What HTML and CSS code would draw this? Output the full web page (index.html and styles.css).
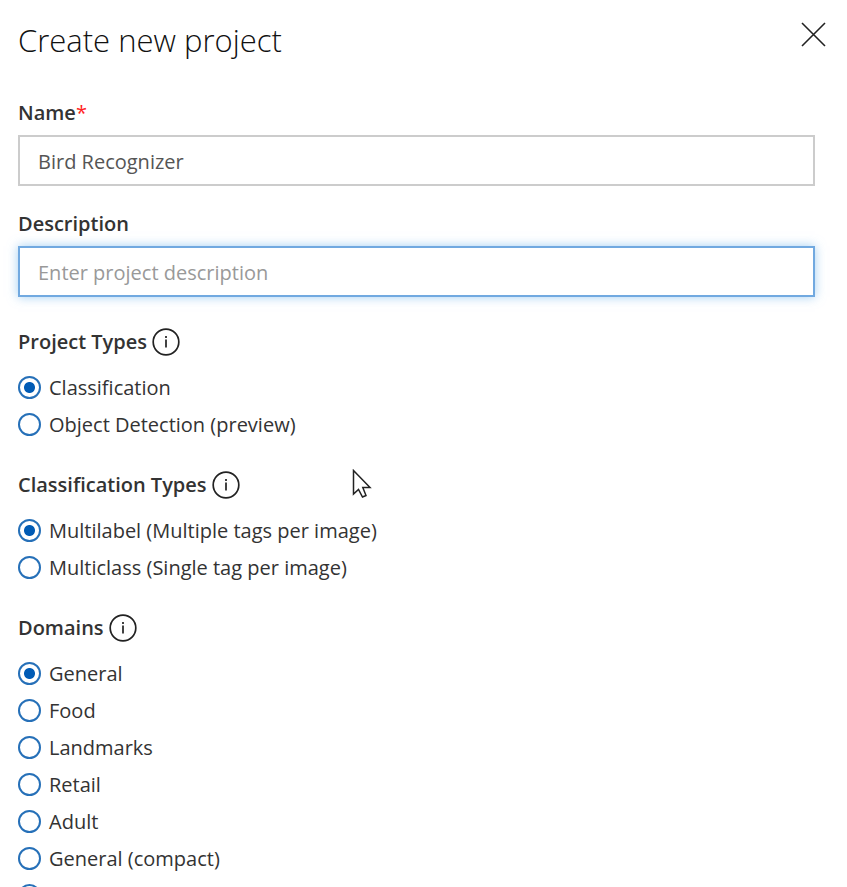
FILE: index.html
```html
<!DOCTYPE html>
<html lang="en">
<head>
  <meta charset="utf-8">
  <meta name="viewport" content="width=device-width, initial-scale=1">
  <title>Create new project</title>
  <link rel="stylesheet" href="styles.css">
</head>
<body>
  <main class="panel">
    <header class="panel-header">
      <h1 class="title">Create new project</h1>
      <button class="close" type="button" aria-label="Close">
        <svg width="26" height="26" viewBox="0 0 26 26" stroke-width="1.6" aria-hidden="true"><path d="M1 1 24 24M24 1 1 24"/></svg>
      </button>
    </header>

    <form class="form">
      <div class="field">
        <label class="label" for="name">Name<span class="required">*</span></label>
        <input class="input" id="name" type="text" value="Bird Recognizer">
      </div>
      <div class="field">
        <label class="label" for="description">Description</label>
        <input class="input input-active" id="description" type="text" placeholder="Enter project description">
      </div>

      <div class="group" role="radiogroup" aria-labelledby="project-types">
        <div class="group-head">
          <span class="label" id="project-types">Project Types</span>
          <button class="info" type="button" aria-label="About project types">
            <svg width="28" height="28" viewBox="0 0 28 28" stroke-width="1.7" aria-hidden="true"><circle cx="14" cy="14" r="12.8"/><path d="M14 11.5V19.5M14 8V10"/></svg>
          </button>
        </div>
        <label class="option"><input class="radio" type="radio" name="type" checked>Classification</label>
        <label class="option"><input class="radio" type="radio" name="type">Object Detection (preview)</label>
      </div>

      <div class="group" role="radiogroup" aria-labelledby="classification-types">
        <div class="group-head">
          <span class="label" id="classification-types">Classification Types</span>
          <button class="info" type="button" aria-label="About classification types">
            <svg width="28" height="28" viewBox="0 0 28 28" stroke-width="1.7" aria-hidden="true"><circle cx="14" cy="14" r="12.8"/><path d="M14 11.5V19.5M14 8V10"/></svg>
          </button>
        </div>
        <label class="option"><input class="radio" type="radio" name="classification" checked>Multilabel (Multiple tags per image)</label>
        <label class="option"><input class="radio" type="radio" name="classification">Multiclass (Single tag per image)</label>
      </div>

      <div class="group" role="radiogroup" aria-labelledby="domains">
        <div class="group-head">
          <span class="label" id="domains">Domains</span>
          <button class="info" type="button" aria-label="About domains">
            <svg width="28" height="28" viewBox="0 0 28 28" stroke-width="1.7" aria-hidden="true"><circle cx="14" cy="14" r="12.8"/><path d="M14 11.5V19.5M14 8V10"/></svg>
          </button>
        </div>
        <label class="option"><input class="radio" type="radio" name="domain" checked>General</label>
        <label class="option"><input class="radio" type="radio" name="domain">Food</label>
        <label class="option"><input class="radio" type="radio" name="domain">Landmarks</label>
        <label class="option"><input class="radio" type="radio" name="domain">Retail</label>
        <label class="option"><input class="radio" type="radio" name="domain">Adult</label>
        <label class="option"><input class="radio" type="radio" name="domain">General (compact)</label>
        <div class="option"><input class="radio" type="radio" name="domain" aria-label="Food (compact)"></div>
      </div>
    </form>

    <svg class="pointer" width="20" height="30" viewBox="0 0 20 30" stroke-width="1.5" aria-hidden="true"><path d="M1.5 1.5V25L6.5 20.5 10.5 28 14 26.5 10.8 18.5H18Z"/></svg>
  </main>
</body>
</html>
```

FILE: styles.css
```css
* {
  box-sizing: border-box;
}

body {
  margin: 0;
  background: #fff;
  color: #333;
  font-family: "Segoe UI", "Open Sans", sans-serif;
  font-size: 20px;
  line-height: 24px;
}

.panel {
  position: relative;
  height: 100vh;
  overflow: hidden;
  padding: 20px 18px;
}

.panel-header {
  display: flex;
  justify-content: space-between;
  align-items: flex-start;
}

.title {
  margin: 0;
  color: #111;
  font-size: 31px;
  font-weight: 300;
  line-height: 40px;
}

.close,
.info {
  display: block;
  padding: 0;
  border: 0;
  background: none;
}

.close {
  padding: 2px;
}

.close svg,
.info svg {
  display: block;
  fill: none;
  stroke: #222;
}

.form {
  padding-top: 41px;
}

.field {
  display: grid;
  gap: 10px;
  margin: 0 14px 26px 0;
}

.label {
  font-weight: 600;
}

.required {
  color: #f22;
  font-weight: 400;
}

.input {
  width: 100%;
  height: 51px;
  padding: 2px 18px 0;
  border: 2px solid #ccc;
  outline: 0;
  background: #fff;
  color: #555;
  font: inherit;
}

.input::placeholder {
  color: #999;
  opacity: 1;
}

.input-active {
  border-color: #71a9e0;
  box-shadow: 0 0 10px rgba(102, 175, 233, 0.6);
}

.group {
  display: grid;
  gap: 14px;
  margin: 31px 0 35px;
}

.group + .group {
  margin-top: 0;
}

.group-head {
  display: flex;
  align-items: center;
  gap: 5px;
  margin-bottom: 6px;
}

.option {
  display: flex;
  align-items: center;
  gap: 8px;
  line-height: 23px;
}

.radio {
  appearance: none;
  width: 23px;
  height: 23px;
  margin: 0;
  border: 2px solid #2670b8;
  border-radius: 50%;
  background: #fff;
}

.radio:checked {
  background: radial-gradient(circle, #005bb5 5px, #fff 6px);
}

.pointer {
  position: absolute;
  top: 469px;
  left: 352px;
  fill: #fff;
  stroke: #222;
}
```
